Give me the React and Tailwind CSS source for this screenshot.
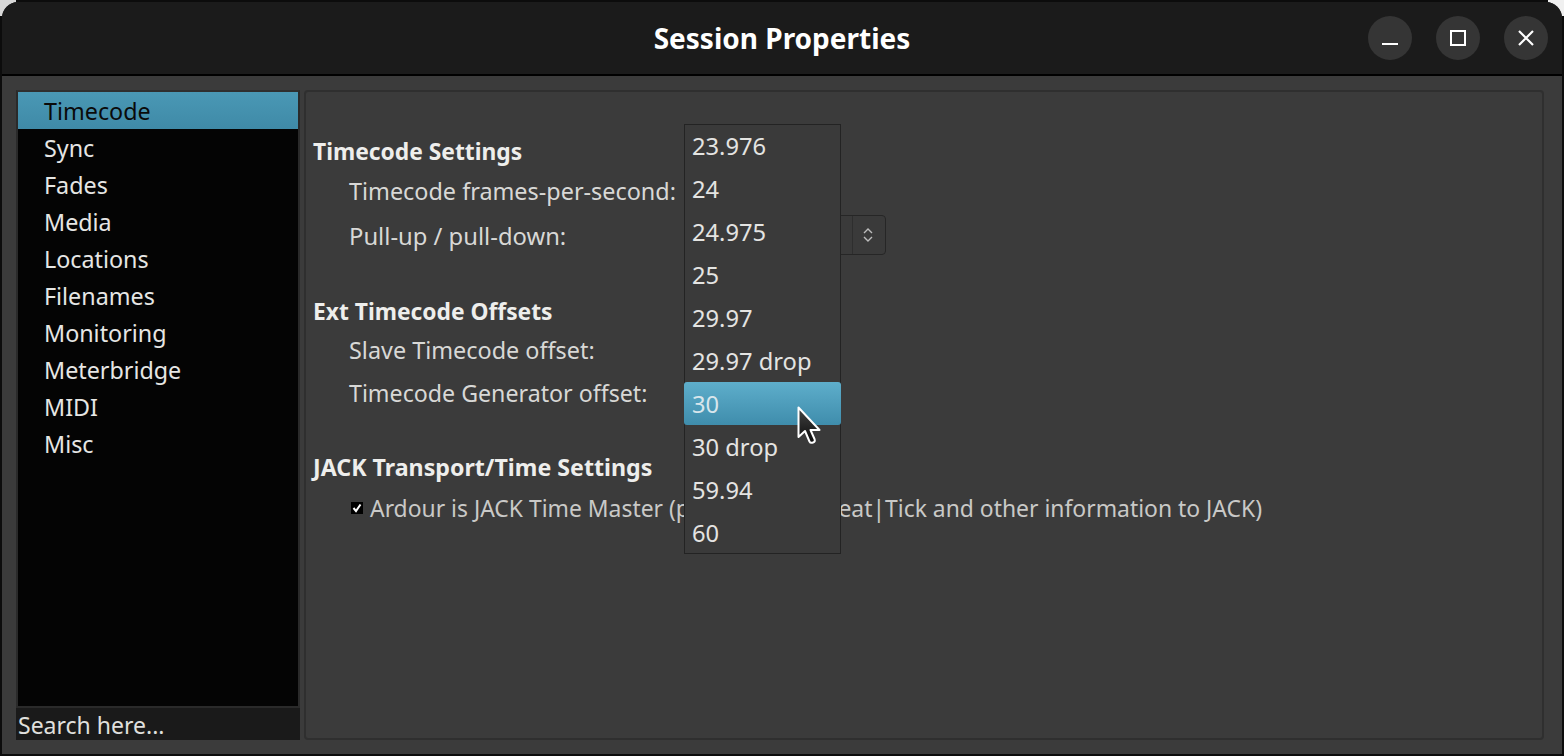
import React from "react";

const nav = ["Timecode","Sync","Fades","Media","Locations","Filenames","Monitoring","Meterbridge","MIDI","Misc"];
const fps = ["23.976","24","24.975","25","29.97","29.97 drop","30","30 drop","59.94","60"];

function Heading({ children, className = "" }) {
  return <div className={`h-[30px] font-bold text-[#eeeeec] whitespace-nowrap ${className}`}>{children}</div>;
}
function Row({ children, className = "" }) {
  return <div className={`h-[30px] leading-[30px] pl-9 text-[#d8d8d6] whitespace-nowrap ${className}`}>{children}</div>;
}

export default function App() {
  return (
    <div className="w-[1564px] h-[756px] bg-[#0c0c0c] relative overflow-hidden text-[23px]" style={{ fontFamily: '"Noto Sans", sans-serif' }}>
      <div className="absolute top-0 left-0 w-4 h-4 bg-[#d8d8d8]" />
      <div className="absolute top-0 right-0 w-4 h-4 bg-[#f0f0f0]" />
      <div className="relative mx-[2px] mt-[2px] h-[752px] w-[1560px] flex flex-col rounded-t-[16px] overflow-hidden bg-[#3b3b3b]">
        <div className="h-[74px] shrink-0 bg-[#1b1b1b] border-b-2 border-black flex items-center justify-center relative">
          <span className="font-bold text-[28px] text-white">Session Properties</span>
          <div className="absolute right-[14px] top-[14px] flex gap-6">
            <button className="w-11 h-11 rounded-full bg-[#353535] flex items-center justify-center">
              <svg width="16" height="16" viewBox="0 0 16 16"><rect x="0" y="13" width="16" height="2" fill="#fff" /></svg>
            </button>
            <button className="w-11 h-11 rounded-full bg-[#353535] flex items-center justify-center">
              <svg width="16" height="16" viewBox="0 0 16 16"><rect x="1" y="1" width="14" height="14" fill="none" stroke="#fff" strokeWidth="2" /></svg>
            </button>
            <button className="w-11 h-11 rounded-full bg-[#353535] flex items-center justify-center">
              <svg width="16" height="16" viewBox="0 0 16 16"><path d="M1 1L15 15M15 1L1 15" stroke="#fff" strokeWidth="2.2" /></svg>
            </button>
          </div>
        </div>
        <div className="flex-1 flex pl-[14px] pr-[18px] pt-[14px] pb-[14px] gap-[4px]">
          <div className="w-[284px] flex flex-col">
            <div className="flex-1 border-2 border-[#2a2a2a] bg-[#040404] border-t-[#2f2f2f] text-[23.3px]">
              {nav.map((n, i) => (
                <div key={n} className={`h-[37px] leading-[39px] pl-[26px] ${i === 0 ? "bg-gradient-to-b from-[#4a98b5] to-[#3f8aa7] text-[#0a0a0a]" : "text-[#e6e6e4]"}`}>{n}</div>
              ))}
            </div>
            <div className="h-[32px] bg-[#1a1a1a] text-[#e0e0de] pl-[2px] leading-[34px]">Search here...</div>
          </div>
          <div className="flex-1 rounded border-2 border-[#2f2f2f] pl-[7px] pt-[44px]">
            <Heading className="text-[22.8px] leading-[32px]">Timecode Settings</Heading>
            <Row className="mt-[10px] text-[23.4px]">Timecode frames-per-second:</Row>
            <div className="relative mt-[15px]">
              <Row className="text-[23.8px]">Pull-up / pull-down:</Row>
              <div className="absolute left-[375px] top-[-6px] w-[198px] h-[40px] rounded bg-[#3a3a3a] border border-[#262626] flex justify-end">
                <div className="w-[33px] border-l border-[#2e2e2e] flex items-center justify-center pr-[2px]">
                  <svg width="12" height="20" viewBox="0 0 12 20" fill="none" stroke="#bdbdbd" strokeWidth="1.4"><path d="M2 8L6 4L10 8M2 12L6 16L10 12" /></svg>
                </div>
              </div>
            </div>
            <Heading className="mt-[45px] text-[22.8px] leading-[32px]">Ext Timecode Offsets</Heading>
            <Row className="mt-[9px] text-[23.4px]">Slave Timecode offset:</Row>
            <Row className="mt-[13px] text-[23.2px]">Timecode Generator offset:</Row>
            <Heading className="mt-[44px] text-[23.2px] leading-[30px]">JACK Transport/Time Settings</Heading>
            <div className="mt-[11px] h-[30px] pl-[38px] flex items-center gap-[7px] text-[#c9c9c7] text-[22.9px] whitespace-nowrap">
              <span className="w-3 h-3 bg-black flex items-center justify-center">
                <svg width="10" height="10" viewBox="0 0 10 10" fill="none" stroke="#fff" strokeWidth="2"><path d="M1.5 5L4 8L8.5 1.5" /></svg>
              </span>
              <span className="pt-[2px]">Ardour is JACK Time Master (provides Bar|Beat|Tick and other information to JACK)</span>
            </div>
          </div>
        </div>
        <div className="absolute left-[682px] top-[122px] w-[157px] h-[430px] bg-[#3a3a3a] border border-[#232323] text-[#e4e4e2] text-[23.7px]">
          {fps.map((f) => (
            <div key={f} className={f === "30"
              ? "h-[43px] leading-[45px] -mt-[1px] mb-[1px] -mx-[1px] pl-[8px] rounded-[3px] bg-gradient-to-b from-[#5eaecb] to-[#3f8dac] text-[#d8e6ec]"
              : "h-[43px] leading-[43px] pl-[7px]"}>{f}</div>
          ))}
        </div>
      </div>
      <svg className="absolute left-[796px] top-[405px]" width="28" height="42" viewBox="0 0 28 42">
        <defs>
          <linearGradient id="c" x1="0" y1="0" x2="0" y2="1"><stop offset="0" stopColor="#444" /><stop offset="1" stopColor="#0a0a0a" /></linearGradient>
        </defs>
        <path d="M2.5 2.5V32L9 26L13.5 36.5Q14.5 38.5 17 37.5Q19.5 36.5 18.5 34L14.5 25H23.5Z" fill="url(#c)" stroke="#fff" strokeWidth="2" strokeLinejoin="round" />
      </svg>
    </div>
  );
}
